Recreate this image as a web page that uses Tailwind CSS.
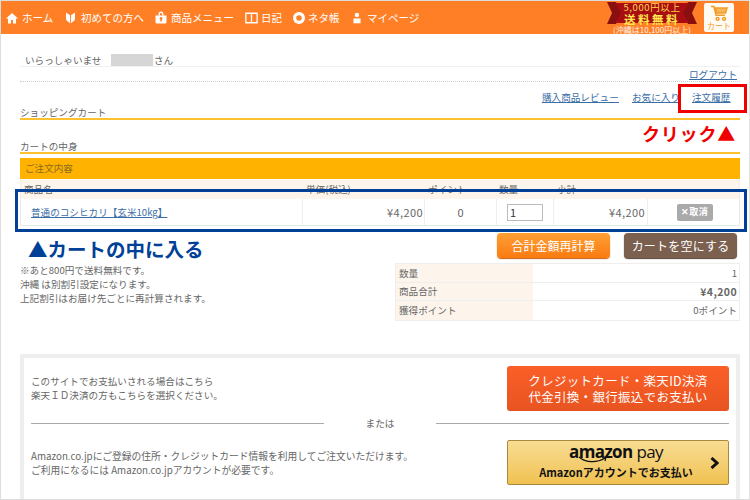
<!DOCTYPE html>
<html lang="ja">
  <head>
    <meta charset="UTF-8" />
    <title>ショッピングカート</title>
    <script src="https://cdn.jsdelivr.net/npm/@tailwindcss/browser@4"></script>
  </head>
  <body class="bg-white">
    <div class="relative w-[750px] h-[500px] overflow-hidden border border-[#dddddd] border-r-[#e4e4e4] text-[#666666] text-[9.6px] font-['Noto_Sans_CJK_JP','Noto_Sans',sans-serif]">
      <!-- header -->
      <header class="flex items-center justify-between h-[33px] bg-[#ff7f27] text-white text-[10.5px]">
        <nav class="flex items-center pl-[5px] h-full whitespace-nowrap">
          <a class="flex items-center gap-[4px] w-[60px]">
            <svg class="w-[12px] h-[12px]" viewBox="0 0 24 24" fill="#fff"><path d="M12 2 0 13h4v10h6v-7h4v7h6V13h4z" /></svg>
            ホーム
          </a>
          <a class="flex items-center gap-[6px] w-[89px]">
            <svg class="w-[9px] h-[13px]" viewBox="0 0 20 26" fill="#fff"><path d="M0 2 9 8v18L2 20c-2-2-2-4-2-6zM20 2 11 8v18l7-6c2-2 2-4 2-6z" /></svg>
            初めての方へ
          </a>
          <a class="flex items-center gap-[4px] w-[90px]">
            <svg class="w-[12px] h-[13px]" viewBox="0 0 24 26" fill="#fff"><path d="M7 9V6a5 5 0 0 1 10 0v3h-3V6a2 2 0 0 0-4 0v3z" /><path fill-rule="evenodd" d="M1 9h22v13a3 3 0 0 1-3 3H4a3 3 0 0 1-3-3zm11 3a3 3 0 0 0-1.500 5.500V21h3v-3.500A3 3 0 0 0 12 12z" /></svg>
            商品メニュー
          </a>
          <a class="flex items-center gap-[3px] w-[48px]">
            <svg class="w-[13px] h-[12px]" viewBox="0 0 30 26" fill="none" stroke="#fff" stroke-width="3"><path d="M2 2h26v22H2zM15 2v22" /></svg>
            日記
          </a>
          <a class="flex items-center gap-[3px] w-[60px]">
            <svg class="w-[12px] h-[12px]" viewBox="0 0 26 26"><circle cx="13" cy="13" r="13" fill="#fff" /><circle cx="13" cy="13" r="6" fill="#ff7f27" /></svg>
            ネタ帳
          </a>
          <a class="flex items-center gap-[6px]">
            <svg class="w-[8px] h-[12px]" viewBox="0 0 18 26" fill="#fff"><circle cx="9" cy="6" r="5" /><path d="M1 14h16v11H1z" /></svg>
            マイページ
          </a>
        </nav>
        <div class="flex items-center h-full pr-[15px]">
          <div class="relative w-[90px] h-full flex flex-col items-center">
            <svg class="absolute left-0 top-[1px] w-[90px] h-[23px]" viewBox="0 0 90 23">
              <path d="M0 0h9l6 11-6 11H0l5-11zM90 0h-9l-6 11 6 11h9l-5-11z" fill="#8a0f0f" />
              <path d="M8 1h74l-6 10 6 10H8l6-10z" fill="#a80d12" />
            </svg>
            <span class="relative mt-[1px] text-[#ffd84a] text-[9.5px] leading-[11px] tracking-[0.6px]">5,000円以上</span>
            <span class="relative text-[#ffe94d] text-[11.5px] leading-[12px] font-bold tracking-[2.5px]">送料無料</span>
            <span class="relative text-white/90 text-[8px] leading-[10px] whitespace-nowrap">(沖縄は10,100円以上)</span>
          </div>
          <div class="ml-[7px] w-[30px] h-[29px] rounded-[2px] bg-[#fffaf2] flex flex-col items-center pt-[2px]">
            <svg class="w-[18px] h-[16px]" viewBox="0 0 24 22" fill="none" stroke="#f59a23" stroke-width="2"><path d="M1 2h4l3 12h12" /><path d="M7 4h16l-2 7H8z" fill="#f8b65a" /><circle cx="10" cy="19" r="2" /><circle cx="19" cy="19" r="2" /></svg>
            <span class="text-[#f59a23] text-[8px] leading-[10px]">カート</span>
          </div>
        </div>
      </header>

      <main class="pl-[19px] pr-[9px]">
        <!-- welcome -->
        <div class="h-[33px] border-b border-[#f0f0f0] flex items-end pl-[5px] leading-[11px]">
          <span class="w-[86px]">いらっしゃいませ</span>
          <span class="w-[42px] h-[12px] bg-[#d6d6d6]"></span>
          <span class="ml-[1px]">さん</span>
        </div>
        <div class="h-[15px] border-b border-dotted border-[#cccccc] flex items-center justify-end pr-[3px] text-[#3a6ea5] underline">ログアウト</div>

        <!-- shopping cart heading -->
        <div class="h-[38px] border-b-2 border-[#fdc02f] flex justify-between pr-[10px] leading-[12px]">
          <span class="self-end">ショッピングカート</span>
          <div class="flex mt-[9px] text-[#3a6ea5] underline whitespace-nowrap">
            <a class="w-[90px]">購入商品レビュー</a>
            <a class="w-[60px]">お気に入り</a>
            <a class="w-[38px]">注文履歴</a>
          </div>
        </div>

        <div class="h-[34px] border-b-2 border-[#fdc02f] flex items-end leading-[12px]">カートの中身</div>

        <!-- cart table -->
        <div class="mt-[4px] h-[21px] bg-[#ffb300] text-[#8a6a20] flex items-center pl-[5px]">ご注文内容</div>
        <div class="mt-[1px] h-[19px] bg-[#fdf5ec] grid grid-cols-[282px_122px_72px_57px_94px_93px] border-x border-[#eeeeee] leading-[19px]">
          <span class="pl-[3px]">商品名</span>
          <span class="pl-[3px]">単価(税込)</span>
          <span class="pl-[3px]">ポイント</span>
          <span class="pl-[2px]">数量</span>
          <span class="pl-[3px]">小計</span>
          <span></span>
        </div>
        <div class="h-[27px] grid grid-cols-[282px_122px_72px_57px_94px_93px] items-stretch border border-t-0 border-[#e8e8e8] text-[11px]">
          <a class="pl-[10px] flex items-center text-[9.6px] text-[#3a6ea5] underline border-r border-[#eeeeee]">普通のコシヒカリ【玄米10kg】</a>
          <span class="flex items-center justify-end pr-[1px] tracking-[0.4px] border-r border-[#eeeeee]">¥4,200</span>
          <span class="flex items-center justify-center border-r border-[#eeeeee]">0</span>
          <span class="flex items-center justify-center border-r border-[#eeeeee]">
            <input type="text" value="1" class="w-[36px] h-[17px] border border-[#bbbbbb] px-[2px] text-[11px] text-[#333333]" />
          </span>
          <span class="flex items-center justify-end pr-[2px] tracking-[0.4px] border-r border-[#eeeeee]">¥4,200</span>
          <span class="flex items-center justify-center">
            <span class="flex items-center justify-center w-[36px] h-[17px] rounded-[2px] bg-[#aaaaaa] text-white text-[9px] font-bold tracking-[0.5px]">✕取消</span>
          </span>
        </div>

        <!-- buttons -->
        <div class="h-[25px] mt-[7px] flex justify-end gap-[14px] pr-[3px] text-white text-[12px]">
          <button class="w-[113px] rounded-[4px] bg-gradient-to-b from-[#ffa033] to-[#f97a0f] shadow-[0_1px_1px_#c96010]">合計金額再計算</button>
          <button class="w-[113px] rounded-[4px] bg-[#7b6050] shadow-[0_1px_1px_#54402f] tracking-[0.2px]">カートを空にする</button>
        </div>

        <!-- notes and totals -->
        <div class="mt-[5px] flex justify-between">
          <div class="leading-[14px]">
            <p>※あと800円で送料無料です。</p>
            <p>沖縄 は別割引設定になります。</p>
            <p>上記割引はお届け先ごとに再計算されます。</p>
          </div>
          <div class="w-[345px] h-[58px] grid grid-cols-[137px_1fr] grid-rows-3 border border-[#eeeeee]">
            <span class="bg-[#fdf5ec] pl-[3px] flex items-center border-b border-[#eeeeee]">数量</span>
            <span class="flex items-center justify-end pr-[2px] border-b border-[#eeeeee]">1</span>
            <span class="bg-[#fdf5ec] pl-[3px] flex items-center border-b border-[#eeeeee]">商品合計</span>
            <span class="flex items-center justify-end pr-[2px] text-[10.5px] tracking-[0.4px] font-bold border-b border-[#eeeeee]">¥4,200</span>
            <span class="bg-[#fdf5ec] pl-[3px] flex items-center">獲得ポイント</span>
            <span class="flex items-center justify-end pr-[2px]">0ポイント</span>
          </div>
        </div>

        <!-- payment -->
        <section class="mt-[33px] h-[160px] border-4 border-b-0 border-[#eeeeee] px-[7px] pt-[8px]">
          <div class="flex items-center justify-between h-[45px]">
            <div class="leading-[14px] pb-[2px]">
              <p>このサイトでお支払いされる場合はこちら</p>
              <p>楽天ＩＤ決済の方もこちらを選択ください。</p>
            </div>
            <button class="w-[222px] h-[45px] rounded-[3px] bg-gradient-to-b from-[#fb5f28] to-[#e85420] text-white text-[12.5px] leading-[16px] tracking-[0.3px]">クレジットカード・楽天ID決済<br />代金引換・銀行振込でお支払い</button>
          </div>
          <div class="mt-[6px] h-[12px] flex items-center">
            <span class="w-[293px] h-px bg-[#aaaaaa]"></span>
            <span class="w-[112px] text-center">または</span>
            <span class="flex-1 h-px bg-[#aaaaaa]"></span>
          </div>
          <div class="mt-[11px] flex items-center justify-between h-[45px]">
            <div class="leading-[14px] text-[9.75px]">
              <p>Amazon.co.jpにご登録の住所・クレジットカード情報を利用してご注文いただけます。</p>
              <p>ご利用になるには Amazon.co.jpアカウントが必要です。</p>
            </div>
            <button class="relative shrink-0 w-[222px] h-[45px] rounded-[2px] border border-[#a98a3c] bg-gradient-to-b from-[#f9dd93] to-[#efc14f] text-[#111111] flex flex-col items-center">
              <span class="relative mr-[4px] text-[17px] leading-[21px] tracking-[-0.6px] font-['Open_Sans',sans-serif]"><b>amazon</b> pay
                <svg class="absolute left-[9px] top-[15px] w-[30px] h-[8px]" viewBox="0 0 30 8" fill="none" stroke="#111" stroke-width="1.2"><path d="M1 1c7 6 18 6 26 1M24 1l4 0-1 4" /></svg>
              </span>
              <span class="mt-[3px] mr-[4px] text-[11px] leading-[14px] font-bold">Amazonアカウントでお支払い</span>
              <svg class="absolute right-[9px] top-[16px] w-[9px] h-[12px]" viewBox="0 0 9 12" fill="none" stroke="#111" stroke-width="3"><path d="M1.500 1 7 6l-5.500 5" /></svg>
            </button>
          </div>
        </section>
      </main>

      <!-- annotations -->
      <div class="absolute left-[677px] top-[83px] w-[69px] h-[29px] border-[3px] border-[#f00000]"></div>
      <div class="absolute left-[641px] top-[119px] text-[#f00000] text-[18px] leading-[26px] font-bold tracking-[0.8px] whitespace-nowrap">クリック▲</div>
      <div class="absolute left-[14px] top-[188px] w-[732px] h-[43px] border-[3px] border-[#004097]"></div>
      <div class="absolute left-[27px] top-[235px] text-[#004097] text-[19.5px] leading-[26px] font-bold whitespace-nowrap">▲カートの中に入る</div>
    </div>
  </body>
</html>
